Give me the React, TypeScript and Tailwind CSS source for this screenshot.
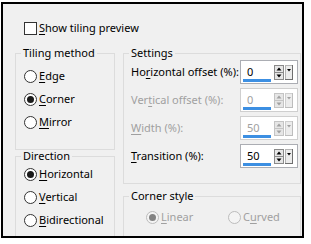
import React from "react";

function Radio({ checked, disabled }: { checked?: boolean; disabled?: boolean }) {
  return (
    <span
      className={`w-[13px] h-[13px] shrink-0 rounded-full border flex items-center justify-center ${
        disabled ? "border-[#bcbcbc] bg-[#f4f4f4]" : "border-[#333333] bg-white"
      }`}
    >
      {checked && (
        <span className={`w-[7px] h-[7px] rounded-full ${disabled ? "bg-[#838383]" : "bg-[#1a1a1a]"}`} />
      )}
    </span>
  );
}

function Label({ pre, u, post, disabled }: { pre?: string; u: string; post?: string; disabled?: boolean }) {
  return (
    <span className={`whitespace-nowrap ${disabled ? "text-[#a0a0a0]" : "text-black"}`}>
      {pre}
      <span className="underline underline-offset-[2px]">{u}</span>
      {post}
    </span>
  );
}

function RadioRow({
  checked,
  disabled,
  pre,
  u,
  post,
}: {
  checked?: boolean;
  disabled?: boolean;
  pre?: string;
  u: string;
  post?: string;
}) {
  return (
    <div className="h-[23px] flex items-center gap-[2px]">
      <Radio checked={checked} disabled={disabled} />
      <Label pre={pre} u={u} post={post} disabled={disabled} />
    </div>
  );
}

function SpinButtons({ disabled }: { disabled?: boolean }) {
  const tri = disabled ? "#a0a0a0" : "#000000";
  return (
    <div className="flex items-center gap-[1px] ml-[2px]">
      <svg width="10" height="15" viewBox="0 0 10 15">
        <rect x="0.5" y="0.5" width="9" height="14" fill="#e6e6e6" stroke={disabled ? "#c4c4c4" : "#8a8a8a"} />
        <line x1="1" y1="7.5" x2="9" y2="7.5" stroke={disabled ? "#c4c4c4" : "#8a8a8a"} />
        <polygon points="5,2.5 2.5,5.5 7.5,5.5" fill={tri} />
        <polygon points="2.5,9.5 7.5,9.5 5,12.5" fill={tri} />
      </svg>
      <svg width="8" height="15" viewBox="0 0 8 15">
        <rect x="0.5" y="0.5" width="7" height="14" fill="#ececec" stroke={disabled ? "#cfcfcf" : "#b4b4b4"} />
        <line x1="7.5" y1="0" x2="7.5" y2="15" stroke={disabled ? "#bdbdbd" : "#6f6f6f"} />
        <line x1="0" y1="14.5" x2="8" y2="14.5" stroke={disabled ? "#bdbdbd" : "#6f6f6f"} />
        <polygon points="2,4 6,4 4,6.5" fill={tri} />
      </svg>
    </div>
  );
}

function SpinBox({ value, disabled }: { value: string; disabled?: boolean }) {
  return (
    <div
      className={`w-[58px] h-[24px] shrink-0 border bg-white flex items-center ${
        disabled ? "border-[#cfcfcf]" : "border-[#abadb3]"
      }`}
    >
      <div className="w-[31px] h-full flex flex-col">
        <span className={`pl-[6px] pt-[4px] leading-[14px] ${disabled ? "text-[#a0a0a0]" : "text-black"}`}>
          {value}
        </span>
        <span className="mt-auto mb-[1px] ml-[2px] h-[3px] w-[28px] bg-[#3c8fe2]" />
      </div>
      <SpinButtons disabled={disabled} />
    </div>
  );
}

function SettingRow({
  pre,
  u,
  post,
  value,
  disabled,
}: {
  pre?: string;
  u: string;
  post?: string;
  value: string;
  disabled?: boolean;
}) {
  return (
    <div className="h-[26px] flex items-center justify-between pl-[7px] pr-[2px]">
      <Label pre={pre} u={u} post={post} disabled={disabled} />
      <SpinBox value={value} disabled={disabled} />
    </div>
  );
}

export default function App() {
  return (
    <div className="w-[311px] h-[244px] bg-white pl-[1px] pt-[2px] font-['Noto_Sans',sans-serif] text-[11px]">
      <div className="w-[303px] h-[236px] border-2 border-black bg-[#f0f0f0] overflow-hidden pt-[16px] pl-[12px] pr-[1px]">
        <div className="h-[17px] flex items-center pl-[9px] gap-[2px]">
          <span className="w-[13px] h-[13px] border border-[#333333] bg-white shrink-0" />
          <Label u="S" post="how tiling preview" />
        </div>
        <div className="mt-[10px] flex gap-[8px]">
          <div className="w-[100px] shrink-0 flex flex-col">
            <fieldset className="h-[103px] min-w-0 border border-[#dcdcdc]">
              <legend className="ml-[5px] px-[2px] leading-[12px] whitespace-nowrap">Tiling method</legend>
              <div className="pl-[8px] pt-[6px]">
                <RadioRow u="E" post="dge" />
                <RadioRow checked u="C" post="orner" />
                <RadioRow u="M" post="irror" />
              </div>
            </fieldset>
            <fieldset className="h-[95px] min-w-0 border border-[#dcdcdc]">
              <legend className="ml-[5px] px-[2px] leading-[12px] whitespace-nowrap">Direction</legend>
              <div className="pl-[8px] pt-[1px]">
                <RadioRow checked u="H" post="orizontal" />
                <RadioRow u="V" post="ertical" />
                <RadioRow u="B" post="idirectional" />
              </div>
            </fieldset>
          </div>
          <div className="w-[178px] shrink-0 flex flex-col">
            <fieldset className="h-[137px] min-w-0 border border-[#dcdcdc]">
              <legend className="ml-[5px] px-[2px] leading-[12px] whitespace-nowrap">Settings</legend>
              <div className="flex flex-col gap-[2px]">
                <SettingRow pre="Ho" u="r" post="izontal offset (%):" value="0" />
                <SettingRow pre="Ver" u="t" post="ical offset (%):" value="0" disabled />
                <SettingRow u="W" post="idth (%):" value="50" disabled />
                <SettingRow u="T" post="ransition (%):" value="50" />
              </div>
            </fieldset>
            <fieldset className="mt-[6px] h-[60px] min-w-0 border border-[#dcdcdc]">
              <legend className="ml-[5px] px-[2px] leading-[12px] whitespace-nowrap">Corner style</legend>
              <div className="flex items-center pl-[22px] pt-[7px]">
                <div className="w-[82px] flex items-center gap-[2px]">
                  <Radio checked disabled />
                  <Label u="L" post="inear" disabled />
                </div>
                <div className="flex items-center gap-[2px]">
                  <Radio disabled />
                  <Label pre="C" u="u" post="rved" disabled />
                </div>
              </div>
            </fieldset>
          </div>
        </div>
      </div>
    </div>
  );
}
